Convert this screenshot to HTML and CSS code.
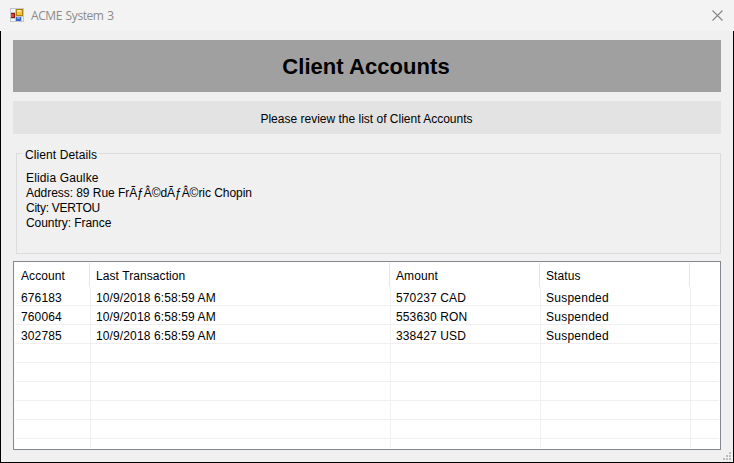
FILE: index.html
```html
<!DOCTYPE html>
<html lang="en">
<head>
<meta charset="utf-8">
<title>ACME System 3</title>
<link rel="stylesheet" href="styles.css">
</head>
<body>
<div class="window">
  <header class="titlebar">
    <svg class="app-icon" width="14" height="14" viewBox="0 0 14 14" shape-rendering="crispEdges">
      <path fill="#c3c6cb" d="M0 0h14v14H0z"/>
      <path fill="#f6f6f6" d="M1 1h4v3H1zM1 11h4v2H1zM12 9h1v4h-1z"/>
      <path fill="#8e1410" d="M1 5h4v5H1z"/>
      <path fill="#d8483a" d="M1 6h3v3H1z"/>
      <path fill="#ad8113" d="M6 1h7v7H6z"/>
      <path fill="#f8c62c" d="M7 2h5v5H7z"/>
      <path fill="#ffe68a" d="M7 2h4v2H7z"/>
      <path fill="#3567c4" d="M6 9h5v4H6z"/>
      <path fill="#6ea5f5" d="M7 9h3v2H7z"/>
    </svg>
    <span class="window-title">ACME System 3</span>
    <svg class="close" width="11" height="11" viewBox="0 0 11 11"><path d="M.5.5l10 10M10.500.5l-10 10" stroke="#858585" stroke-width="1.1"/></svg>
  </header>
  <main class="client">
    <h1 class="heading">Client Accounts</h1>
    <p class="notice">Please review the list of Client Accounts</p>
    <section class="group">
      <h2 class="legend">Client Details</h2>
      <div class="name">Elidia Gaulke</div>
      <div class="address">Address: 89 Rue FrÃƒÂ©dÃƒÂ©ric Chopin</div>
      <div class="city">City: VERTOU</div>
      <div class="country">Country: France</div>
    </section>
    <section class="list">
      <div class="row head"><span>Account</span><span>Last Transaction</span><span>Amount</span><span>Status</span><span></span></div>
      <div class="row"><span>676183</span><span>10/9/2018 6:58:59 AM</span><span class="amount">570237 CAD</span><span class="status">Suspended</span><span></span></div>
      <div class="row"><span>760064</span><span>10/9/2018 6:58:59 AM</span><span class="amount">553630 RON</span><span class="status">Suspended</span><span></span></div>
      <div class="row"><span>302785</span><span>10/9/2018 6:58:59 AM</span><span class="amount">338427 USD</span><span class="status">Suspended</span><span></span></div>
      <div class="row"><span></span><span></span><span></span><span></span><span></span></div>
      <div class="row"><span></span><span></span><span></span><span></span><span></span></div>
      <div class="row"><span></span><span></span><span></span><span></span><span></span></div>
      <div class="row"><span></span><span></span><span></span><span></span><span></span></div>
      <div class="row"><span></span><span></span><span></span><span></span><span></span></div>
      <div class="row last"><span></span><span></span><span></span><span></span><span></span></div>
    </section>
  </main>
  <svg class="grip" width="8" height="8" viewBox="0 0 8 8" shape-rendering="crispEdges"><path fill="#bdbdbd" d="M6 0h2v2H6zM3 3h2v2H3zM6 3h2v2H6zM0 6h2v2H0zM3 6h2v2H3zM6 6h2v2H6z"/></svg>
</div>
</body>
</html>
```

FILE: styles.css
```css
* { box-sizing: border-box; }
body { margin: 0; font: 12px/15px "Liberation Sans", Arial, sans-serif; color: #000; }
h1, h2, p { margin: 0; font-weight: normal; font-size: inherit; }
.window { position: relative; width: 734px; height: 463px; background: #f0f0f0; overflow: hidden; }
.titlebar { height: 31px; display: flex; align-items: center; padding: 0 11px 0 10px; background: #f3f3f3; color: #8b8b8b; }
.app-icon { margin-bottom: 1px; }
.window-title { font: 12px/16px "Open Sans", "Noto Sans", sans-serif; margin: 1px auto 0 7px; letter-spacing: -.42px; word-spacing: 1px; }
.client { height: 432px; border: 1px solid #000; border-top: 0; padding: 9px 12px 0; }
.heading { height: 52px; background: #a0a0a0; text-align: center; font-size: 22px; line-height: 54px; font-weight: bold; letter-spacing: .05px; text-indent: -2px; }
.notice { height: 33px; margin-top: 9px; background: #e3e3e3; text-align: center; line-height: 36px; text-indent: -1px; }
.group { height: 101px; margin: 19px 0 0 3px; border: 1px solid #dcdcdc; padding: 0 0 0 9px; }
.legend { width: max-content; height: 15px; margin: -7px 0 9px -4px; padding: 0 2px 0 3px; background: #f0f0f0; line-height: 16px; letter-spacing: .1px; }
.name { letter-spacing: .15px; }
.address { letter-spacing: -.05px; }
.city { letter-spacing: -.25px; }
.country { letter-spacing: -.05px; }
.list { height: 189px; margin-top: 7px; border: 1px solid #828790; background: #fff; padding: 1px; overflow: hidden; }
.row { display: grid; grid-template: 100% / 76px 300px 150px 150px 1fr; height: 19px; line-height: 22px; border-bottom: 1px solid #f0f0f0; letter-spacing: .12px; }
.row span { min-height: 0; padding-left: 6px; border-right: 1px solid #f0f0f0; white-space: nowrap; }
.row span + span { padding-left: 5px; }
.row span:last-child { border-right: 0; }
.row .amount { letter-spacing: .12px; }
.row .status { letter-spacing: .25px; }
.row.head { grid-template-columns: 75px 300px 150px 150px 1fr; height: 24px; line-height: 26px; border: 0; letter-spacing: .08px; }
.row.head span { border-color: #e5e5e5; }
.row.head span + span { padding-left: 6px; }
.row.last { height: 9px; border: 0; }
.grip { position: absolute; right: 3px; bottom: 3px; }
```
